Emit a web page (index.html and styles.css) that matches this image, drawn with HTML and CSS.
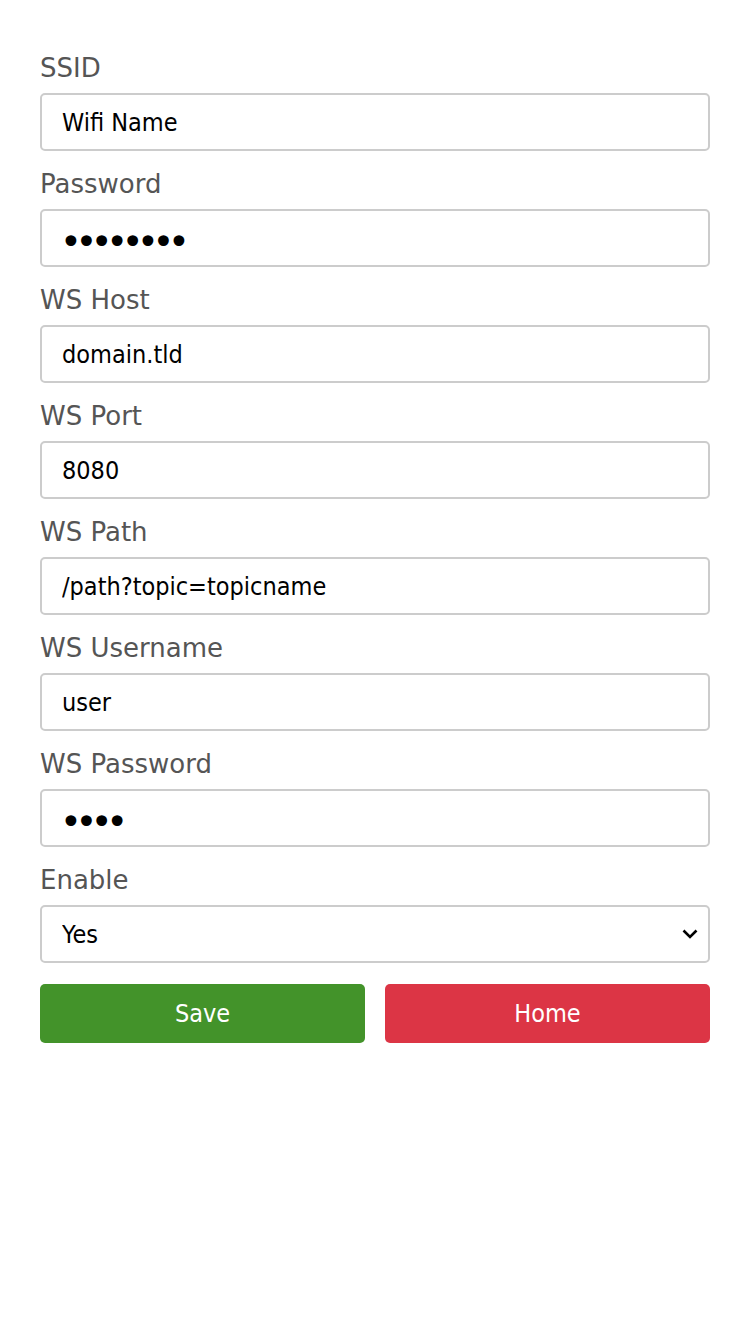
FILE: index.html
```html
<!DOCTYPE html>
<html lang="en">
<head>
<meta charset="utf-8">
<title>Settings</title>
<link rel="stylesheet" href="styles.css">
</head>
<body>
<form class="form">
  <label class="field">
    <span class="label">SSID</span>
    <input class="input" type="text" value="Wifi Name">
  </label>
  <label class="field">
    <span class="label">Password</span>
    <input class="input input-secret" type="password" value="password">
  </label>
  <label class="field">
    <span class="label">WS Host</span>
    <input class="input" type="text" value="domain.tld">
  </label>
  <label class="field">
    <span class="label">WS Port</span>
    <input class="input" type="text" value="8080">
  </label>
  <label class="field">
    <span class="label">WS Path</span>
    <input class="input" type="text" value="/path?topic=topicname">
  </label>
  <label class="field">
    <span class="label">WS Username</span>
    <input class="input" type="text" value="user">
  </label>
  <label class="field">
    <span class="label">WS Password</span>
    <input class="input input-secret" type="password" value="pass">
  </label>
  <label class="field">
    <span class="label">Enable</span>
    <span class="select-wrap">
      <select class="input select">
        <option selected>Yes</option>
        <option>No</option>
      </select>
      <svg class="chevron" width="16" height="10" viewBox="0 0 16 10"><path d="M1.5 1.5 L8 8 L14.5 1.5" fill="none" stroke="#000" stroke-width="2.6"/></svg>
    </span>
  </label>
  <div class="actions">
    <button type="button" class="btn btn-save">Save</button>
    <button type="button" class="btn btn-home">Home</button>
  </div>
</form>
</body>
</html>
```

FILE: styles.css
```css
html, body {
  margin: 0;
  padding: 0;
  background: #fff;
}

body {
  padding: 53px 40px 40px;
}

.form {
  display: flex;
  flex-direction: column;
}

.field {
  display: flex;
  flex-direction: column;
  gap: 10px;
  margin-bottom: 18px;
}

.label {
  font-family: "DejaVu Sans", Verdana, sans-serif;
  font-size: 26px;
  line-height: 30px;
  color: #555;
}

.input {
  box-sizing: border-box;
  width: 100%;
  height: 58px;
  margin: 0;
  padding: 0 20px;
  border: 2px solid #ccc;
  border-radius: 5px;
  background: #fff;
  color: #000;
  font-family: "DejaVu Sans Condensed", "DejaVu Sans", sans-serif;
  font-size: 25px;
  outline: none;
}

.input-secret {
  font-family: "DejaVu Sans", sans-serif;
  font-size: 37px;
  letter-spacing: -6.4px;
  padding: 9px 20px 0 18px;
}

.select-wrap {
  position: relative;
  display: block;
}

.select {
  appearance: none;
  -webkit-appearance: none;
  padding-left: 20px;
}

.chevron {
  position: absolute;
  right: 12px;
  top: 24px;
  pointer-events: none;
}

.actions {
  display: grid;
  grid-template-columns: 1fr 1fr;
  gap: 20px;
  margin-top: 3px;
}

.btn {
  height: 59px;
  border: none;
  border-radius: 5px;
  color: #fff;
  font-family: "DejaVu Sans Condensed", "DejaVu Sans", sans-serif;
  font-size: 25px;
  cursor: pointer;
}

.btn-save {
  background: #43932a;
}

.btn-home {
  background: #dc3545;
}
```
